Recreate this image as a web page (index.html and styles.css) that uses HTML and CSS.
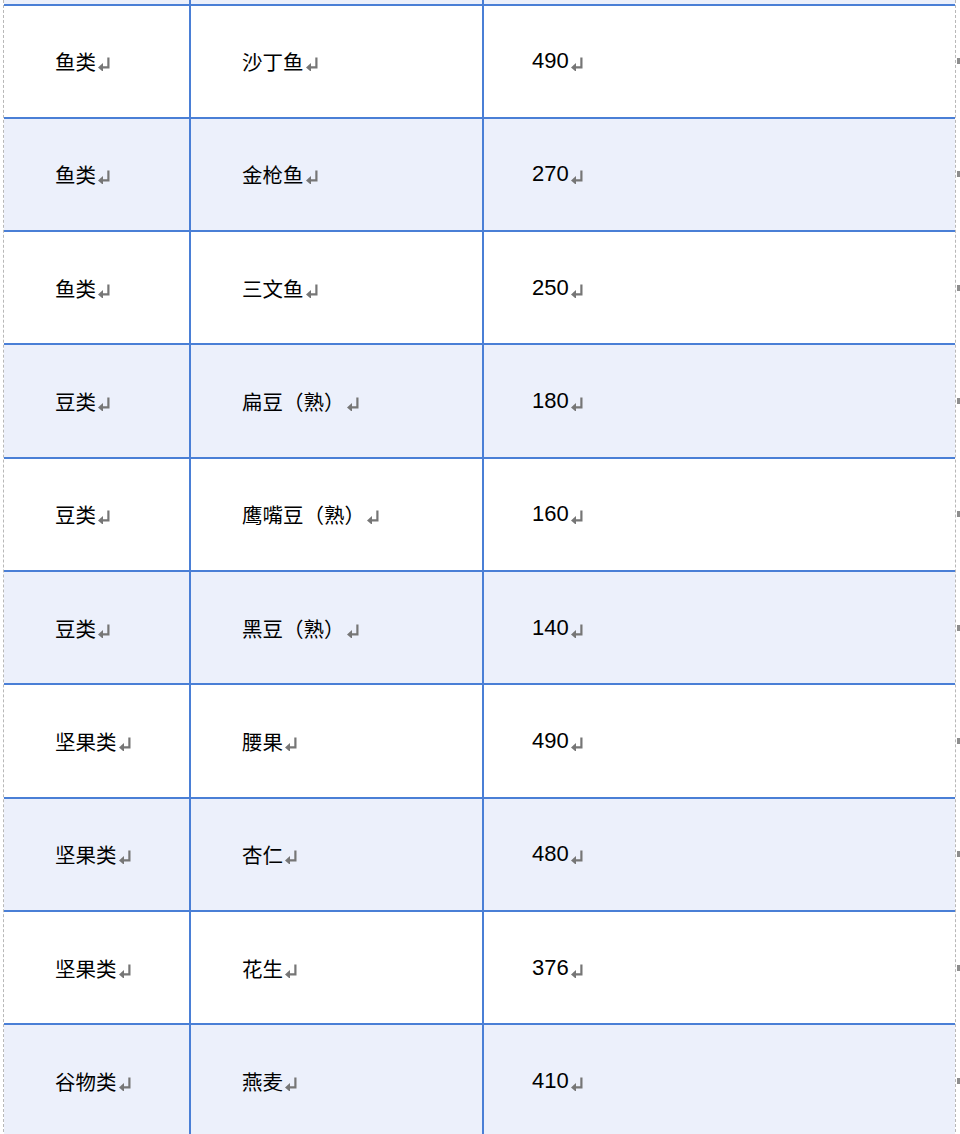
FILE: index.html
```html
<!DOCTYPE html>
<html lang="zh-CN">
<head>
<meta charset="utf-8">
<title>食物表</title>
<link rel="stylesheet" href="styles.css">
</head>
<body>
<svg class="defs" width="0" height="0" aria-hidden="true">
  <symbol id="pm" viewBox="0 0 12 14">
    <path d="M10.4 0.5 V10.4 H3.5" fill="none" stroke="currentColor" stroke-width="2.2"/>
    <polygon points="0,10.4 5,6 5,14.8" fill="currentColor"/>
  </symbol>
</svg>
<div class="sheet">
  <div class="row shade stub">
    <div class="cell c1"></div><div class="cell c2"></div><div class="cell c3"></div>
  </div>
  <div class="row">
    <div class="cell c1"><span class="t">鱼类</span><svg class="pm"><use href="#pm"/></svg></div>
    <div class="cell c2"><span class="t">沙丁鱼</span><svg class="pm"><use href="#pm"/></svg></div>
    <div class="cell c3"><span class="t num">490</span><svg class="pm"><use href="#pm"/></svg></div>
  </div>
  <div class="row shade">
    <div class="cell c1"><span class="t">鱼类</span><svg class="pm"><use href="#pm"/></svg></div>
    <div class="cell c2"><span class="t">金枪鱼</span><svg class="pm"><use href="#pm"/></svg></div>
    <div class="cell c3"><span class="t num">270</span><svg class="pm"><use href="#pm"/></svg></div>
  </div>
  <div class="row">
    <div class="cell c1"><span class="t">鱼类</span><svg class="pm"><use href="#pm"/></svg></div>
    <div class="cell c2"><span class="t">三文鱼</span><svg class="pm"><use href="#pm"/></svg></div>
    <div class="cell c3"><span class="t num">250</span><svg class="pm"><use href="#pm"/></svg></div>
  </div>
  <div class="row shade">
    <div class="cell c1"><span class="t">豆类</span><svg class="pm"><use href="#pm"/></svg></div>
    <div class="cell c2"><span class="t">扁豆（熟）</span><svg class="pm"><use href="#pm"/></svg></div>
    <div class="cell c3"><span class="t num">180</span><svg class="pm"><use href="#pm"/></svg></div>
  </div>
  <div class="row">
    <div class="cell c1"><span class="t">豆类</span><svg class="pm"><use href="#pm"/></svg></div>
    <div class="cell c2"><span class="t">鹰嘴豆（熟）</span><svg class="pm"><use href="#pm"/></svg></div>
    <div class="cell c3"><span class="t num">160</span><svg class="pm"><use href="#pm"/></svg></div>
  </div>
  <div class="row shade">
    <div class="cell c1"><span class="t">豆类</span><svg class="pm"><use href="#pm"/></svg></div>
    <div class="cell c2"><span class="t">黑豆（熟）</span><svg class="pm"><use href="#pm"/></svg></div>
    <div class="cell c3"><span class="t num">140</span><svg class="pm"><use href="#pm"/></svg></div>
  </div>
  <div class="row">
    <div class="cell c1"><span class="t">坚果类</span><svg class="pm"><use href="#pm"/></svg></div>
    <div class="cell c2"><span class="t">腰果</span><svg class="pm"><use href="#pm"/></svg></div>
    <div class="cell c3"><span class="t num">490</span><svg class="pm"><use href="#pm"/></svg></div>
  </div>
  <div class="row shade">
    <div class="cell c1"><span class="t">坚果类</span><svg class="pm"><use href="#pm"/></svg></div>
    <div class="cell c2"><span class="t">杏仁</span><svg class="pm"><use href="#pm"/></svg></div>
    <div class="cell c3"><span class="t num">480</span><svg class="pm"><use href="#pm"/></svg></div>
  </div>
  <div class="row">
    <div class="cell c1"><span class="t">坚果类</span><svg class="pm"><use href="#pm"/></svg></div>
    <div class="cell c2"><span class="t">花生</span><svg class="pm"><use href="#pm"/></svg></div>
    <div class="cell c3"><span class="t num">376</span><svg class="pm"><use href="#pm"/></svg></div>
  </div>
  <div class="row shade">
    <div class="cell c1"><span class="t">谷物类</span><svg class="pm"><use href="#pm"/></svg></div>
    <div class="cell c2"><span class="t">燕麦</span><svg class="pm"><use href="#pm"/></svg></div>
    <div class="cell c3"><span class="t num">410</span><svg class="pm"><use href="#pm"/></svg></div>
  </div>
</div>
</body>
</html>
```
FILE: styles.css
```css
html, body {
  margin: 0;
  padding: 0;
  background: #ffffff;
}
body {
  width: 960px;
  height: 1134px;
  overflow: hidden;
  font-family: "Liberation Sans", "Noto Sans CJK SC", sans-serif;
  color: #000000;
}
.defs {
  position: absolute;
  width: 0;
  height: 0;
}
.sheet {
  margin-left: 3px;
  width: 951px;
  border-left: 1px dashed #b8b8b8;
  border-right: 1px dashed #b8b8b8;
  min-height: 1134px;
}
.row {
  position: relative;
  display: grid;
  grid-template-columns: 185px 293px 473px;
  box-sizing: border-box;
  height: 113.33px;
  border-top: 2px solid #4a7fd6;
  background: #ffffff;
}
.row.shade {
  background: #ecf0fb;
}
.row.stub {
  height: 3.5px;
  border-top: none;
}
.row.stub::after {
  display: none;
}
.row::after {
  content: "";
  position: absolute;
  right: -5px;
  top: 50%;
  width: 3px;
  height: 6px;
  margin-top: -3px;
  background: #8d8d8d;
}
.cell {
  box-sizing: border-box;
  display: flex;
  align-items: center;
  min-width: 0;
}
.c1 {
  padding-left: 51px;
}
.c2 {
  border-left: 2px solid #4a7fd6;
  padding-left: 51px;
}
.c3 {
  border-left: 2px solid #4a7fd6;
  padding-left: 48px;
}
.t {
  font-family: "Noto Sans CJK SC", sans-serif;
  font-size: 20.5px;
  font-weight: 400;
  line-height: 24px;
}
.t.num {
  font-family: "Liberation Sans", "Noto Sans CJK SC", sans-serif;
  font-size: 22px;
}
.pm {
  width: 12px;
  height: 14px;
  margin-left: 2px;
  margin-top: 6px;
  color: #767676;
  flex: none;
}
```
